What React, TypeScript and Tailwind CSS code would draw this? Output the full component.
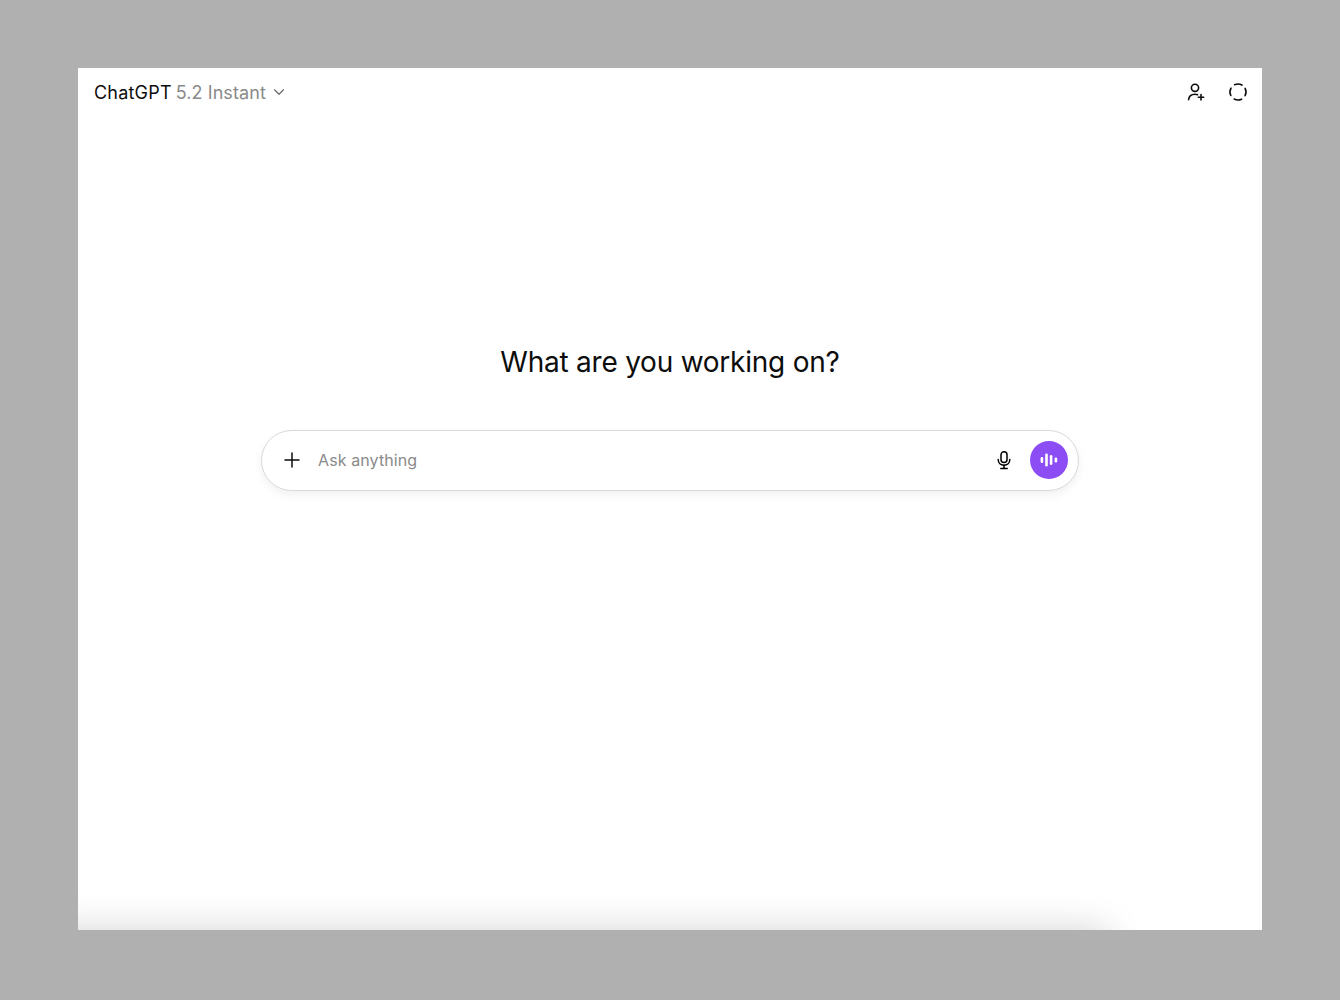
import { Plus, ChevronDown } from 'lucide-react'

const FONT = 'font-[Inter,"Liberation_Sans",sans-serif]'

function AddPerson() {
  return (
    <svg width="20" height="20" viewBox="0 0 20 20" fill="none" stroke="currentColor" strokeWidth="1.6" strokeLinecap="round">
      <circle cx="9" cy="5.8" r="3.6" />
      <path d="M2.6 17.6c.3-3.3 2.9-5.4 6.4-5.4 1 0 1.8.2 2.6.5" />
      <path d="M15 12.6v5.4M12.3 15.3h5.4" />
    </svg>
  )
}

function DashedCircle() {
  return (
    <svg width="20" height="20" viewBox="0 0 20 20" fill="none" stroke="currentColor" strokeWidth="1.6" strokeLinecap="round">
      <circle cx="10" cy="10" r="8" strokeDasharray="7.6 4.97" transform="rotate(-27 10 10)" />
    </svg>
  )
}

function MicIcon() {
  return (
    <svg width="20" height="20" viewBox="0 0 20 20" fill="none" stroke="currentColor" strokeWidth="1.5" strokeLinecap="round">
      <rect x="7" y="1.8" width="6" height="10.6" rx="3" />
      <path d="M4.2 9.6c0 3.4 2.5 5.6 5.8 5.6s5.8-2.2 5.8-5.6" />
      <path d="M10 15.2v3M6.8 18.4h6.4" />
    </svg>
  )
}

function VoiceBars() {
  return (
    <svg width="18" height="18" viewBox="0 0 18 18" fill="white">
      <rect x="0.6" y="6" width="2.6" height="6" rx="1.3" />
      <rect x="5.2" y="2.5" width="2.6" height="13" rx="1.3" />
      <rect x="9.8" y="4" width="2.6" height="10" rx="1.3" />
      <rect x="14.6" y="6.5" width="2.6" height="5" rx="1.3" />
    </svg>
  )
}

export default function App() {
  return (
    <div className={`h-[1000px] bg-[#b0b0b0] px-[78px] pt-[68px] pb-[70px] ${FONT}`}>
      <div className="relative flex h-full flex-col overflow-hidden bg-white">
        <header className="flex h-12 shrink-0 items-center justify-between pl-4 pr-[14px]">
          <div className="flex items-center text-[18px]">
            <span className="tracking-[0.2px] text-[#0d0d0d]">ChatGPT</span>
            <span className="ml-[4px] tracking-[0.08px] text-[#8a8a8a]">5.2 Instant</span>
            <ChevronDown className="ml-[4px] text-[#666]" size={18} strokeWidth={1.5} />
          </div>
          <div className="flex items-center gap-[22px] text-[#0d0d0d]">
            <AddPerson />
            <DashedCircle />
          </div>
        </header>

        <main className="flex flex-col items-center pt-[226px]">
          <h1 className="text-[28px] leading-[40px] font-normal tracking-[-0.23px] text-[#0d0d0d]">What are you working on?</h1>
          <div className="mt-[48px] flex h-[61px] w-[818px] items-center rounded-[31px] border border-[#d9d9d9] bg-white pb-px pl-[18px] pr-[10px] shadow-[0_4px_10px_rgba(0,0,0,0.06)]">
            <Plus size={24} strokeWidth={1.5} className="text-[#0d0d0d]" />
            <span className="ml-[14px] flex-1 text-[16px] tracking-[0.1px] text-[#8a8a8a]">Ask anything</span>
            <MicIcon />
            <div className="ml-[16px] flex size-[38px] items-center justify-center rounded-full bg-[#8c4df5]">
              <VoiceBars />
            </div>
          </div>
        </main>

        <div className="absolute -left-[40px] top-full h-10 w-[1075px] rounded-[40px] shadow-[0_0_36px_rgba(0,0,0,0.18)]" />
      </div>
    </div>
  )
}
